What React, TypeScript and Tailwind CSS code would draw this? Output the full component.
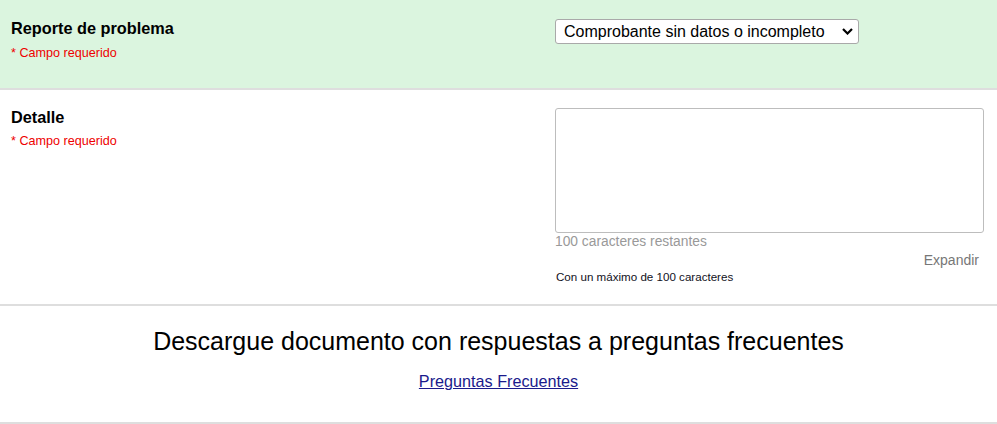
import React from "react";

export default function App() {
  const font = { fontFamily: '"Liberation Sans", Arial, sans-serif' };
  return (
    <div style={font} className="w-[997px] bg-white text-black">
      {/* Section 1 */}
      <div className="flex h-[90px] bg-[#dbf5df] border-b-2 border-[#dedede]">
        <div className="w-[555px] pl-[11px] pt-[19px]">
          <div className="text-[16.3px] leading-[18px] font-bold">Reporte de problema</div>
          <div className="mt-[9px] text-[12.6px] leading-[14px] text-[#ee0000]">* Campo requerido</div>
        </div>
        <div className="flex-1 pt-[19px]">
          <div className="relative w-[304px] h-[25px]">
            <select
              style={font}
              className="appearance-none w-full h-full bg-white border border-[#a9a9a9] rounded-[3px] pl-[8px] text-[16px] leading-[18px] text-black outline-none"
              defaultValue="a"
            >
              <option value="a">Comprobante sin datos o incompleto</option>
            </select>
            <svg
              className="absolute right-[6px] top-[9px] pointer-events-none"
              width="11"
              height="7"
              viewBox="0 0 11 7"
            >
              <path d="M1 1 L5.5 5.5 L10 1" fill="none" stroke="#000" strokeWidth="2.2" />
            </svg>
          </div>
        </div>
      </div>

      {/* Section 2 */}
      <div className="flex h-[216px] border-b-2 border-[#dedede]">
        <div className="w-[555px] pl-[11px] pt-[18px]">
          <div className="text-[16.3px] leading-[18px] font-bold">Detalle</div>
          <div className="mt-[8px] text-[12.6px] leading-[14px] text-[#ee0000]">* Campo requerido</div>
        </div>
        <div className="flex-1 pr-[13px] pt-[18px] flex flex-col">
          <textarea className="w-full h-[125px] border border-[#bdbdbd] rounded-[3px] resize-none bg-white outline-none" />
          <div className="mt-[1px] text-[13.8px] leading-[16px] text-[#999999]">100 caracteres restantes</div>
          <div className="mt-[2px] pr-[5px] text-right text-[14px] leading-[16px] text-[#777777]">Expandir</div>
          <div className="mt-[2px] pl-[1px] text-[11.6px] leading-[14px] text-[#111122]">Con un máximo de 100 caracteres</div>
        </div>
      </div>

      {/* Section 3 */}
      <div className="h-[118px] border-b-2 border-[#dedede] pt-[21px] flex flex-col items-center">
        <div className="text-[25px] leading-[29px] text-black">
          Descargue documento con respuestas a preguntas frecuentes
        </div>
        <a href="#" className="mt-[16px] text-[16.2px] leading-[18px] text-[#1a1a8c] underline">
          Preguntas Frecuentes
        </a>
      </div>
    </div>
  );
}
